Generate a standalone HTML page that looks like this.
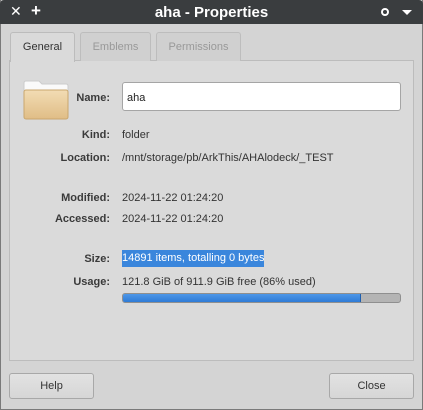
<!DOCTYPE html>
<html><head><style>
*{margin:0;padding:0;box-sizing:border-box}
body{width:423px;height:410px;overflow:hidden;background:#d4d4d4;font-family:"Liberation Sans","DejaVu Sans",sans-serif;font-size:11px;color:#333;position:relative}
.win{position:absolute;left:0;top:0;width:423px;height:410px;border:1px solid #7a7a7a;border-top:none}
.title{position:absolute;left:0;top:0;width:423px;height:24px;background:#3a3d3f;border-radius:4px 4px 0 0}
.title .t{position:absolute;left:0;right:0;top:4px;text-align:center;color:#fff;font-weight:bold;font-size:15px}
.abs{position:absolute}
.tab{position:absolute;top:32px;height:29px;border:1px solid #bdbdbd;border-bottom:none;border-radius:3px 3px 0 0;background:#d0d0d0;color:#999;text-align:center;line-height:29px;font-size:11px}
.page{position:absolute;left:9px;top:60px;width:405px;height:301px;background:#dadada;border:1px solid #bcbcbc}
.lbl{position:absolute;right:313px;font-weight:bold;color:#3a3a3a;white-space:nowrap}
.val{position:absolute;left:122px;white-space:nowrap;color:#333}
.btn{position:absolute;top:373px;width:85px;height:26px;border:1px solid #a8a8a8;border-radius:3px;background:linear-gradient(#e2e2e2,#d6d6d6);text-align:center;line-height:25px;color:#333}
</style></head><body>
<div class="win"></div>
<div class="title"><div class="t">aha - Properties</div>
<div class="abs" style="left:10px;top:3px;color:#fff;font-weight:bold;font-size:14px">✕</div>
<div class="abs" style="left:31px;top:1px;color:#fff;font-weight:bold;font-size:17px">+</div>
<div class="abs" style="left:381px;top:8px;width:8px;height:8px;border:2px solid #fff;border-radius:50%"></div>
<div class="abs" style="left:402px;top:10px;width:0;height:0;border-left:5px solid transparent;border-right:5px solid transparent;border-top:5px solid #fff"></div>
</div>
<div class="page"></div>
<div class="tab" style="left:10px;width:65px;height:30px;background:#dadada;color:#333;border-color:#bcbcbc">General</div>
<div class="tab" style="left:80px;width:71px">Emblems</div>
<div class="tab" style="left:156px;width:85px">Permissions</div>
<svg class="abs" style="left:23px;top:80px" width="46" height="40" viewBox="0 0 46 40">
<path d="M1 3 Q1 1 3 1 H16 L19 4 H43 Q45 4 45 6 V12 H1Z" fill="#fafafa" stroke="#ccc"/>
<rect x="1" y="10" width="44" height="29" rx="2" fill="url(#g)" stroke="#c9a76e"/>
<defs><linearGradient id="g" x1="0" y1="0" x2="0" y2="1"><stop offset="0" stop-color="#f2dcb4"/><stop offset="1" stop-color="#e0bd86"/></linearGradient></defs>
</svg>
<div class="lbl" style="top:92px">Name:</div>
<div class="abs" style="left:122px;top:82px;width:279px;height:29px;background:#fff;border:1px solid #a5a5a5;border-radius:3px;padding:9px 4px;color:#222">aha</div>
<div class="lbl" style="top:129px">Kind:</div><div class="val" style="top:129px">folder</div>
<div class="lbl" style="top:152px">Location:</div><div class="val" style="top:152px">/mnt/storage/pb/ArkThis/AHAlodeck/_TEST</div>
<div class="lbl" style="top:192px">Modified:</div><div class="val" style="top:192px">2024-11-22 01:24:20</div>
<div class="lbl" style="top:213px">Accessed:</div><div class="val" style="top:213px">2024-11-22 01:24:20</div>
<div class="lbl" style="top:253px">Size:</div><div class="val" style="top:250px;background:#3a86dc;color:#fff;padding:2px 0 0;height:17px">14891 items, totalling 0 bytes</div>
<div class="lbl" style="top:276px">Usage:</div><div class="val" style="top:276px">121.8 GiB of 911.9 GiB free (86% used)</div>
<div class="abs" style="left:122px;top:293px;width:279px;height:10px;background:#b4b4b4;border:1px solid #8f8f8f;border-radius:3px;overflow:hidden"><div style="width:238px;height:100%;background:linear-gradient(#4d97e8,#2f7bd6);border-right:1px solid #1f5fae"></div></div>
<div class="btn" style="left:9px">Help</div>
<div class="btn" style="left:329px">Close</div>
</body></html>
